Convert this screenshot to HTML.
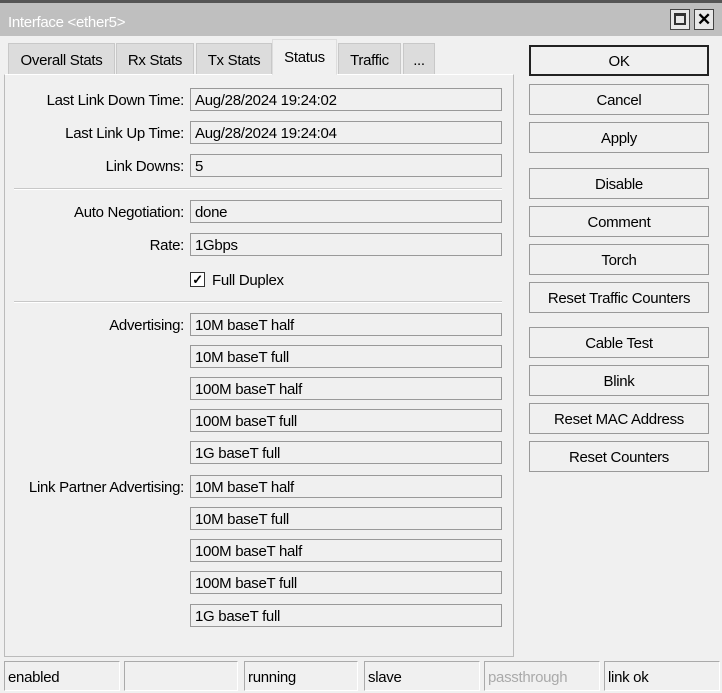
<!DOCTYPE html>
<html><head><style>
*{box-sizing:border-box;margin:0;padding:0}
body{width:722px;height:693px;background:#f0f0f0;font-family:"Liberation Sans",sans-serif;font-size:15px;color:#000;position:relative;overflow:hidden;letter-spacing:-0.3px}
.a{position:absolute}
.title{left:0;top:0;width:722px;height:36px;background:#bfbfbf;border-top:3px solid #555;}
.title span{position:absolute;left:8px;top:11px;color:#fff;font-size:15px}
.wb{top:9px;width:20px;height:21px;border:1px solid #444;background:#e8e8e8}
.tab{top:43px;height:31px;background:#dcdcdc;border:1px solid #c8c8c8;border-bottom:none;text-align:center;line-height:33px}
.panel{left:4px;top:74px;width:510px;height:583px;border:1px solid #bbb;border-top-color:#fff;background:#f0f0f0}
.lbl{right:538px;text-align:right;white-space:nowrap;margin-top:1px}
.f{left:190px;width:312px;height:23px;border:1px solid #999;background:#f0f0f0;padding-left:4px;line-height:23px}
.sep{left:14px;width:488px;height:2px;border-top:1px solid #c8c8c8;border-bottom:1px solid #fff}
.btn{left:529px;width:180px;height:31px;border:1px solid #999;background:#f0f0f0;text-align:center;line-height:31px}
.st{top:661px;height:30px;border:1px solid #aaa;border-right-color:#fff;border-bottom-color:#fff;padding-left:3px;line-height:31px}
</style></head><body>
<div class="a title"><span>Interface &lt;ether5&gt;</span></div>
<div class="a wb" style="left:670px"><div style="position:absolute;left:3px;top:3px;width:12px;height:12px;border:2px solid #333;border-top-width:3px"></div></div>
<div class="a wb" style="left:694px;font-weight:bold;font-size:17px;text-align:center;line-height:19px">✕</div>
<div class="a panel"></div>
<div class="a tab" style="left:8px;width:107px">Overall Stats</div>
<div class="a tab" style="left:116px;width:78px">Rx Stats</div>
<div class="a tab" style="left:196px;width:76px">Tx Stats</div>
<div class="a tab" style="left:272px;width:65px;top:39px;height:36px;background:#f0f0f0;border-color:#ddd;line-height:36px;z-index:2;border-bottom:1px solid #f0f0f0">Status</div>
<div class="a tab" style="left:338px;width:63px">Traffic</div>
<div class="a tab" style="left:403px;width:32px">...</div>

<div class="a lbl" style="top:91px">Last Link Down Time:</div><div class="a f" style="top:88px">Aug/28/2024 19:24:02</div>
<div class="a lbl" style="top:124px">Last Link Up Time:</div><div class="a f" style="top:121px">Aug/28/2024 19:24:04</div>
<div class="a lbl" style="top:157px">Link Downs:</div><div class="a f" style="top:154px">5</div>
<div class="a sep" style="top:188px"></div>
<div class="a lbl" style="top:203px">Auto Negotiation:</div><div class="a f" style="top:200px">done</div>
<div class="a lbl" style="top:236px">Rate:</div><div class="a f" style="top:233px">1Gbps</div>
<div class="a" style="left:190px;top:272px;width:15px;height:15px;border:1px solid #333;background:#fff;font-size:13px;line-height:13px;text-align:center;font-weight:bold">✓</div>
<div class="a" style="left:212px;top:272px">Full Duplex</div>
<div class="a sep" style="top:301px"></div>
<div class="a lbl" style="top:316px">Advertising:</div>
<div class="a f" style="top:313px">10M baseT half</div>
<div class="a f" style="top:345px">10M baseT full</div>
<div class="a f" style="top:377px">100M baseT half</div>
<div class="a f" style="top:409px">100M baseT full</div>
<div class="a f" style="top:441px">1G baseT full</div>
<div class="a lbl" style="top:478px">Link Partner Advertising:</div>
<div class="a f" style="top:475px">10M baseT half</div>
<div class="a f" style="top:507px">10M baseT full</div>
<div class="a f" style="top:539px">100M baseT half</div>
<div class="a f" style="top:571px">100M baseT full</div>
<div class="a f" style="top:604px">1G baseT full</div>

<div class="a btn" style="top:45px;border:2px solid #222;line-height:29px">OK</div>
<div class="a btn" style="top:84px">Cancel</div>
<div class="a btn" style="top:122px">Apply</div>
<div class="a btn" style="top:168px">Disable</div>
<div class="a btn" style="top:206px">Comment</div>
<div class="a btn" style="top:244px">Torch</div>
<div class="a btn" style="top:282px">Reset Traffic Counters</div>
<div class="a btn" style="top:327px">Cable Test</div>
<div class="a btn" style="top:365px">Blink</div>
<div class="a btn" style="top:403px">Reset MAC Address</div>
<div class="a btn" style="top:441px">Reset Counters</div>

<div class="a st" style="left:4px;width:116px">enabled</div>
<div class="a st" style="left:124px;width:114px"></div>
<div class="a st" style="left:244px;width:114px">running</div>
<div class="a st" style="left:364px;width:116px">slave</div>
<div class="a st" style="left:484px;width:116px;color:#aaa">passthrough</div>
<div class="a st" style="left:604px;width:116px">link ok</div>
</body></html>
